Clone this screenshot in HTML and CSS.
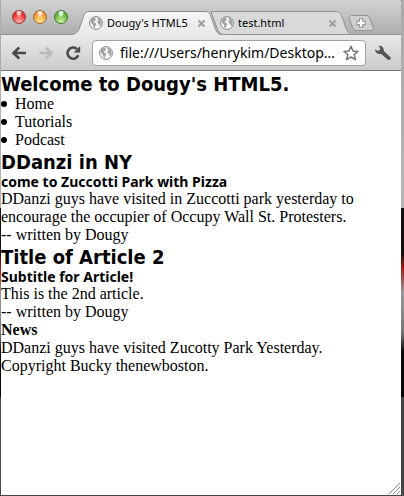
FILE: index.html
```html
<!DOCTYPE html>
<html lang="en">
<head>
    <meta charset="UTF-8">
    <title>Dougy's HTML5</title>
    <meta name="viewport" content="width=device-width, initial-scale=1">
    <link rel="stylesheet" href="styles.css">
</head>
<body>
<svg class="symbols" width="0" height="0" aria-hidden="true">
    <symbol id="globe" viewBox="0 0 14 14">
        <circle cx="7" cy="7" r="6.4" fill="#fafafa" stroke="#858585"/>
        <path d="M2.2 3.2 4.5 1.6 6.8 1.8 6.2 3.4 7.2 4 5.4 5.2 4.6 6.4 6.6 7 7.4 8.4 6.2 10 5.8 12.4 4.2 11 4 8.8 2.6 7.4 1.4 5.4Z M8.6 1.5 11.4 3 12.5 5.5 12.4 8 11.2 10.6 10.2 9.6 10.4 7.8 8.8 7.4 8.2 5.6 9.4 4.4 8.4 3Z" fill="#a3a3a3"/>
    </symbol>
    <symbol id="close" viewBox="0 0 9 9">
        <path d="M1.5 1.5 7.5 7.5M7.5 1.5 1.5 7.5" stroke="#a0a0a0" stroke-width="2.2" fill="none"/>
    </symbol>
</svg>

<div class="window">
    <div class="tab-strip">
        <div class="lights">
            <button type="button" class="light red" aria-label="Close window"></button>
            <button type="button" class="light yellow" aria-label="Minimize window"></button>
            <button type="button" class="light green" aria-label="Zoom window"></button>
        </div>
        <div class="tab active">
            <svg class="tab-shape" viewBox="0 0 152 25" aria-hidden="true">
                <defs>
                    <linearGradient id="activeFill" x1="0" y1="0" x2="0" y2="1">
                        <stop offset="0" stop-color="#f5f5f5"/>
                        <stop offset="1" stop-color="#e9e9e9"/>
                    </linearGradient>
                </defs>
                <path d="M0 25V23.5C6 23.5 8 21 9.500 17L13 7C14.500 2.500 15.500.5 19 .5H135C139 .5 140 3 141.500 7L145 17C146.500 21 148 23.500 152 23.500V25Z" fill="url(#activeFill)"/>
                <path d="M0 23.500C6 23.500 8 21 9.500 17L13 7C14.500 2.500 15.500.5 19 .5H135C139 .5 140 3 141.500 7L145 17C146.500 21 148 23.500 152 23.500" fill="none" stroke="#8e8e8e"/>
            </svg>
            <svg class="globe" aria-hidden="true"><use href="#globe"/></svg>
            <a href="#" class="tab-title">Dougy's HTML5</a>
            <button type="button" class="tab-close" aria-label="Close tab"><svg><use href="#close"/></svg></button>
        </div>
        <div class="tab">
            <svg class="tab-shape" viewBox="0 0 152 25" aria-hidden="true">
                <path d="M10 .5H135C139 .5 140 3 141.500 7L145 17C146.500 21 148 23.500 152 23.500H24C19 23.500 17.500 21 16 17L12 6Z" fill="#d9d9d9" stroke="#929292"/>
            </svg>
            <svg class="globe" aria-hidden="true"><use href="#globe"/></svg>
            <a href="#" class="tab-title">test.html</a>
            <button type="button" class="tab-close" aria-label="Close tab"><svg><use href="#close"/></svg></button>
        </div>
        <button type="button" class="new-tab" aria-label="New tab">
            <svg viewBox="0 0 26 16" aria-hidden="true">
                <path d="M3.500.5H18C20 .5 21 1.500 21.700 3L25 12C25.600 14 25 15.500 23 15.500H8.500C6.500 15.500 5.500 14.500 4.800 13L1.400 4C.8 2 1.500.5 3.500.5Z" fill="#cfcfcf" stroke="#949494"/>
                <path d="M13 3.500V12.500M8.500 8H17.500" stroke="#858585" stroke-width="4.400"/>
                <path d="M13 4.300V11.700M9.300 8H16.700" stroke="#fff" stroke-width="2.400"/>
            </svg>
        </button>
    </div>

    <div class="toolbar">
        <button type="button" class="tool" aria-label="Back">
            <svg viewBox="0 0 16 16"><path d="M15 8H3.500M8.200 2.500 2.500 8 8.200 13.500" fill="none" stroke="#4a4a4a" stroke-width="2.600"/></svg>
        </button>
        <button type="button" class="tool" aria-label="Forward" disabled>
            <svg viewBox="0 0 16 16"><path d="M1.500 8H12.500M7.800 2.500 13.500 8 7.800 13.500" fill="none" stroke="#bcbcbc" stroke-width="2.600"/></svg>
        </button>
        <button type="button" class="tool" aria-label="Reload">
            <svg viewBox="0 0 16 16"><path d="M13.300 10.300A5.600 5.600 0 1 1 12 4" fill="none" stroke="#4a4a4a" stroke-width="2.600"/><path d="M15.200 1V7.500H8.700Z" fill="#4a4a4a"/></svg>
        </button>
        <div class="omnibox">
            <svg class="globe" aria-hidden="true"><use href="#globe"/></svg>
            <input type="text" aria-label="Address" value="file:///Users/henrykim/Desktop…">
            <button type="button" class="star" aria-label="Bookmark this page">
                <svg viewBox="0 0 16 16"><path d="M8 1.300 10 6 15 6.400 11.200 9.700 12.400 14.700 8 12 3.600 14.700 4.800 9.700 1 6.400 6 6Z" fill="#fff" stroke="#777" stroke-width="1.500" stroke-linejoin="round"/></svg>
            </button>
        </div>
        <button type="button" class="wrench" aria-label="Settings">
            <svg viewBox="0 0 18 16"><path d="M4.500.8 6.300 3.200 5.600 5.200 3.400 5.700 1.100 4.200C.9 6.800 2.700 8.900 5.300 9 6.500 9 7.200 9.100 8.100 9.700L13.500 14.500C15.400 16 17.800 13.700 16.300 11.900L10.500 6.800C9.900 6.100 9.800 5.500 9.700 4.600 9.300 2 7.200.3 4.500.8Z" fill="#555"/></svg>
        </button>
    </div>

    <main class="page">
        <header>
            <h1>Welcome to Dougy's HTML5.</h1>
        </header>
        <nav>
            <ul>
                <li>Home</li>
                <li>Tutorials</li>
                <li>Podcast</li>
            </ul>
        </nav>
        <section>
            <article>
                <h1>DDanzi in NY</h1>
                <h2>come to Zuccotti Park with Pizza</h2>
                <p>DDanzi guys have visited in Zuccotti park yesterday to encourage the occupier of Occupy Wall St. Protesters.</p>
                <footer>-- written by Dougy</footer>
            </article>
            <article>
                <h1>Title of Article 2</h1>
                <h2>Subtitle for Article!</h2>
                <p>This is the 2nd article.</p>
                <footer>-- written by Dougy</footer>
            </article>
        </section>
        <aside>
            <h4>News</h4>
            <p>DDanzi guys have visited Zucotty Park Yesterday.</p>
        </aside>
        <footer>Copyright Bucky thenewboston.</footer>
        <svg class="grip" viewBox="0 0 12 12" aria-hidden="true">
            <path d="M1 12 12 1M5 12 12 5M9 12 12 9" stroke="#888" fill="none"/>
        </svg>
    </main>
</div>
</body>
</html>
```

FILE: styles.css
```css
* {
    margin: 0;
    padding: 0;
    box-sizing: border-box;
}
html {
    background: #444746;
}
body {
    display: flex;
    min-height: 100vh;
    padding: 0 3px 1px 1px;
    background: linear-gradient(#aaa 0, #b5b5b5 42%, #111 42%, #1a0c0c 51%, #a11a10 54%, #999 59%, #777 67%, #080a0a 71%, #080a0a 80%, #444746 80%);
}
svg {
    display: block;
}
button {
    border: none;
    background: none;
}
.symbols {
    position: absolute;
}
.window {
    flex: 1;
    min-width: 0;
    display: flex;
    flex-direction: column;
    background: #fff;
    border-radius: 0 4px 0 0;
    overflow: hidden;
}
.tab-strip {
    display: flex;
    align-items: flex-end;
    height: 35px;
    background: linear-gradient(#d2d2d2, #adadad);
    box-shadow: inset 0 -1px #929292;
}
.lights {
    display: flex;
    gap: 7px;
    flex: none;
    width: 69px;
    padding: 0 0 11px 11px;
}
.light {
    width: 14px;
    height: 14px;
    border: 1px solid #6b5a50;
    border-radius: 50%;
}
.red {
    border-color: #9b3a37;
    background: radial-gradient(ellipse at 50% 12%, #fff 0, #fbb 18%, transparent 36%), radial-gradient(circle at 50% 90%, #ffb3ab, #e8393a 60%, #c9252b);
}
.yellow {
    border-color: #a4632c;
    background: radial-gradient(ellipse at 50% 12%, #fff 0, #fdd 18%, transparent 36%), radial-gradient(circle at 50% 90%, #ffe98a, #f2a33a 60%, #d9772a);
}
.green {
    border-color: #4a7a33;
    background: radial-gradient(ellipse at 50% 12%, #fff 0, #dfd 18%, transparent 36%), radial-gradient(circle at 50% 90%, #cdf59a, #6db544 60%, #47912e);
}
.tab {
    position: relative;
    display: flex;
    align-items: center;
    flex: none;
    width: 152px;
    height: 24px;
    padding: 0 16px 0 19px;
}
.tab + .tab {
    margin-left: -21px;
}
.active {
    z-index: 1;
}
.tab-shape {
    position: absolute;
    top: 0;
    left: 0;
    width: 152px;
    height: 25px;
}
.globe {
    position: relative;
    flex: none;
    width: 14px;
    height: 14px;
}
.tab-title {
    position: relative;
    flex: 1;
    margin-left: 4px;
    font: 11px/20px "Noto Sans", sans-serif;
    color: #000;
    text-decoration: none;
    white-space: nowrap;
}
.tab-close {
    position: relative;
}
.tab-close svg {
    width: 9px;
    height: 9px;
}
.new-tab {
    flex: none;
    margin: 0 0 4px -5px;
}
.new-tab svg {
    width: 26px;
    height: 16px;
}
.toolbar {
    display: flex;
    align-items: center;
    height: 36px;
    padding: 0 9px 0 10px;
    background: linear-gradient(#e9e9e9, #cbcbcb);
    border-bottom: 1px solid #777;
}
.tool {
    flex: none;
    margin-right: 11px;
}
.tool svg {
    width: 16px;
    height: 16px;
}
.omnibox {
    display: flex;
    flex: 1;
    align-items: center;
    min-width: 0;
    height: 26px;
    margin-right: 8px;
    padding: 0 6px;
    background: #fff;
    border: 1px solid #a2a2a2;
    border-radius: 4px;
}
.omnibox input {
    flex: 1;
    min-width: 0;
    margin-left: 7px;
    border: none;
    outline: none;
    background: none;
    font: 14px/20px "Noto Sans", sans-serif;
    color: #000;
}
.star svg {
    width: 16px;
    height: 16px;
}
.wrench svg {
    width: 18px;
    height: 16px;
}
.page {
    position: relative;
    flex: 1;
    background: #fff;
    color: #000;
    font: 16px/18px "Liberation Serif", serif;
}
h1 {
    padding-top: 2px;
    font: bold 20px/22px "DejaVu Sans Condensed", "DejaVu Sans", sans-serif;
}
h2 {
    font: bold 14px/17px "Noto Sans", sans-serif;
}
h4 {
    font-size: 16px;
}
li {
    display: flex;
    align-items: center;
    gap: 8px;
}
li::before {
    content: "";
    width: 6px;
    height: 6px;
    border-radius: 50%;
    background: #000;
}
.grip {
    position: absolute;
    right: 1px;
    bottom: 1px;
    width: 12px;
    height: 12px;
}
```
